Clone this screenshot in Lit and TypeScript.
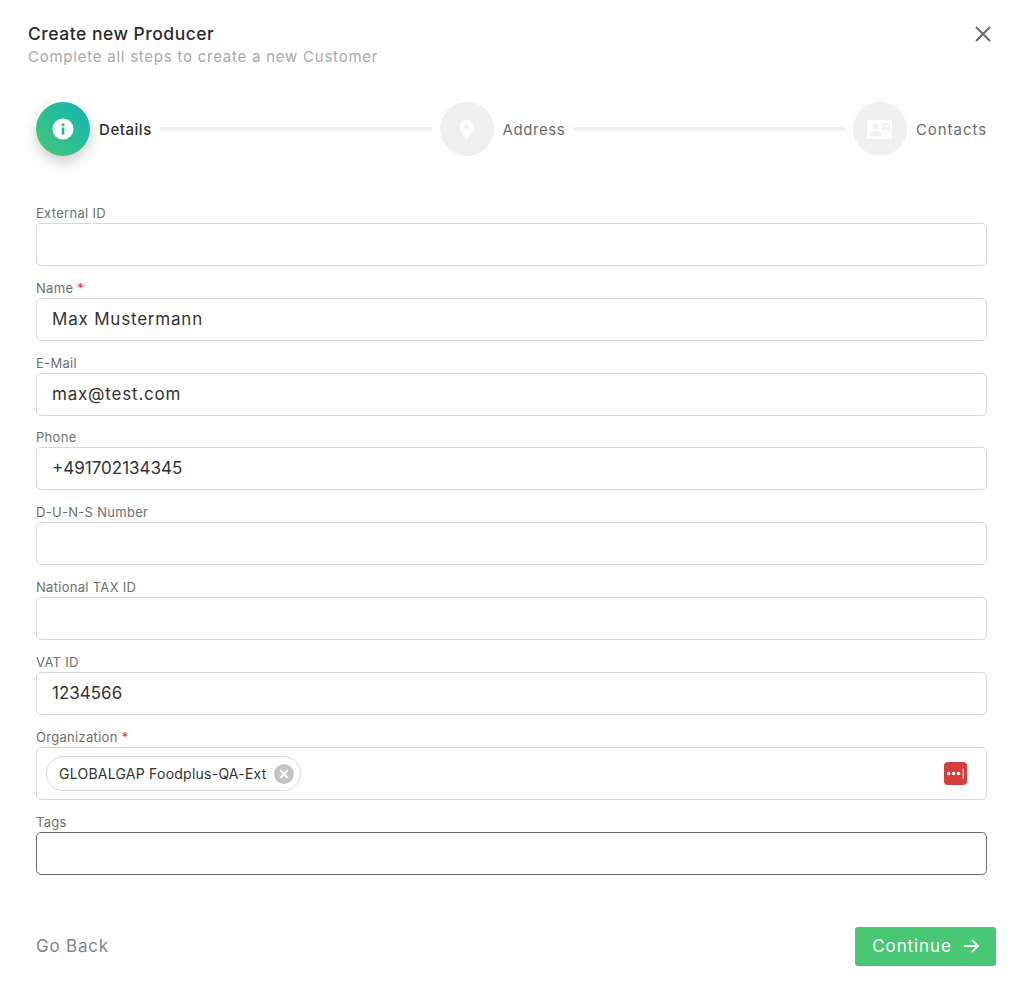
import { html, css, LitElement, nothing } from 'lit'
import { customElement } from 'lit/decorators.js'

type Field = { label: string; value?: string; required?: boolean; focused?: boolean; digits?: boolean }

const FIELDS_TOP: Field[] = [
  { label: 'External ID' },
  { label: 'Name', value: 'Max Mustermann', required: true },
  { label: 'E-Mail', value: 'max@test.com' },
  { label: 'Phone', value: '+491702134345', digits: true },
  { label: 'D-U-N-S Number' },
  { label: 'National TAX ID' },
  { label: 'VAT ID', value: '1234566', digits: true },
]

const infoIcon = html`<svg width="22" height="22" viewBox="0 0 22 22">
  <circle cx="11" cy="11" r="10.5" fill="#fff" />
  <circle cx="11" cy="6.8" r="1.5" fill="#1fb89a" />
  <rect x="9.7" y="9.4" width="2.6" height="7" rx="0.5" fill="#1fb89a" />
</svg>`

const pinIcon = html`<svg width="15" height="21" viewBox="0 0 16 22">
  <path
    fill-rule="evenodd"
    fill="#fff"
    d="M8 0.5C3.8 0.5 0.6 3.7 0.6 7.8C0.6 12.2 5.2 18 8 21.5C10.8 18 15.4 12.2 15.4 7.8C15.4 3.7 12.2 0.5 8 0.5ZM8 5.2A2.7 2.7 0 1 1 8 10.6A2.7 2.7 0 1 1 8 5.2Z"
  />
</svg>`

const contactIcon = html`<svg width="25" height="19" viewBox="0 0 26 20">
  <path
    fill-rule="evenodd"
    fill="#fff"
    d="M1 0H25A1 1 0 0 1 26 1V19A1 1 0 0 1 25 20H1A1 1 0 0 1 0 19V1A1 1 0 0 1 1 0ZM9 4A3.2 3.2 0 1 0 9 10.4A3.2 3.2 0 1 0 9 4ZM3 16.6H15C15 13.4 12.6 11.6 9 11.6C5.4 11.6 3 13.4 3 16.6ZM16 3.4V10H24V3.4ZM16.8 4.2L20 6.9L23.2 4.2V5.4L20 8.1L16.8 5.4Z"
  />
</svg>`

@customElement('app-root')
export class AppRoot extends LitElement {
  static styles = css`
    :host {
      display: block;
      box-sizing: border-box;
      width: 1024px;
      height: 997px;
      background: #fff;
      font-family: Inter, 'Noto Sans', sans-serif;
      color: #2b2b2b;
      overflow: hidden;
    }

    * {
      box-sizing: border-box;
    }

    .head {
      display: flex;
      justify-content: space-between;
      align-items: flex-start;
      padding: 23px 33px 0 28px;
      height: 102px;
    }

    .title {
      font-size: 17.5px;
      line-height: 22px;
      font-weight: 500;
      letter-spacing: 0.5px;
    }

    .subtitle {
      font-size: 15px;
      line-height: 24px;
      color: #a9a9a9;
      letter-spacing: 0.76px;
    }

    .close {
      margin-top: 3px;
      display: block;
    }

    .stepper {
      display: flex;
      align-items: center;
      margin: 0 37px 0 36px;
      height: 54px;
    }

    .circle {
      flex: none;
      width: 54px;
      height: 54px;
      border-radius: 50%;
      background: #efefef;
      display: flex;
      align-items: center;
      justify-content: center;
    }

    .circle.active {
      background: linear-gradient(45deg, #48c774, #0db5b5);
      box-shadow: 0 6px 14px rgba(0, 0, 0, 0.2);
    }

    .step-label {
      flex: none;
      margin-left: 9px;
      padding-top: 1px;
      font-size: 15px;
      line-height: 20px;
      color: #6e6e6e;
      letter-spacing: 0.55px;
    }

    .step-label.active {
      color: #2b2b2b;
      font-weight: 500;
      letter-spacing: 0.55px;
    }

    .step-label.wide {
      letter-spacing: 0.95px;
    }

    .line {
      flex: 1;
      height: 4px;
      margin: 0 8px;
      border-radius: 2px;
      background: #efefef;
    }

    form {
      display: flex;
      flex-direction: column;
      padding: 50px 37px 0 36px;
    }

    .field {
      display: flex;
      flex-direction: column;
      margin-bottom: 14.83px;
    }

    label {
      font-size: 13px;
      line-height: 15px;
      height: 17px;
      color: #6f6f6f;
      letter-spacing: 0.3px;
    }

    .req {
      color: #e8303a;
    }

    .input {
      height: 43px;
      border: 1px solid #d9d9d9;
      border-radius: 5px;
      padding: 0 15px 1px;
      display: flex;
      align-items: center;
      font-size: 17px;
      color: #333;
      letter-spacing: 0.8px;
    }

    .input.digits {
      letter-spacing: 0;
    }

    .input.focused {
      border-color: #6b6b6b;
    }

    .input.tall {
      height: 53.5px;
      padding: 0 19px 0 9px;
      justify-content: space-between;
    }

    .chip {
      display: flex;
      align-items: center;
      height: 35px;
      border: 1px solid #d9d9d9;
      border-radius: 18px;
      padding: 0 6px 0 12px;
      font-size: 14px;
      letter-spacing: 0.24px;
      color: #333;
      gap: 7px;
    }

    .actions {
      display: flex;
      justify-content: space-between;
      align-items: center;
      padding: 37px 28px 0 36px;
    }

    .back {
      font-size: 17px;
      color: #858585;
      letter-spacing: 0.8px;
    }

    .continue {
      display: flex;
      align-items: center;
      justify-content: center;
      gap: 11px;
      width: 141px;
      height: 39px;
      background: #48c774;
      border-radius: 3px;
      color: #fff;
      font-size: 17px;
      letter-spacing: 0.9px;
    }
  `

  private renderField(f: Field) {
    return html`<div class="field">
      <label>${f.label}${f.required ? html` <span class="req">*</span>` : nothing}</label>
      <div class="input ${f.focused ? 'focused' : ''} ${f.digits ? 'digits' : ''}">${f.value ?? ''}</div>
    </div>`
  }

  render() {
    return html`
      <div class="head">
        <div>
          <div class="title">Create new Producer</div>
          <div class="subtitle">Complete all steps to create a new Customer</div>
        </div>
        <svg class="close" width="16" height="16" viewBox="0 0 16 16">
          <path d="M1 1L15 15M15 1L1 15" stroke="#6a6a6a" stroke-width="2" fill="none" />
        </svg>
      </div>

      <div class="stepper">
        <div class="circle active">${infoIcon}</div>
        <div class="step-label active">Details</div>
        <div class="line"></div>
        <div class="circle">${pinIcon}</div>
        <div class="step-label">Address</div>
        <div class="line"></div>
        <div class="circle">${contactIcon}</div>
        <div class="step-label wide">Contacts</div>
      </div>

      <form>
        ${FIELDS_TOP.map((f) => this.renderField(f))}
        <div class="field">
          <label>Organization <span class="req">*</span></label>
          <div class="input tall">
            <div class="chip">
              GLOBALGAP Foodplus-QA-Ext
              <svg width="20" height="20" viewBox="0 0 20 20">
                <circle cx="10" cy="10" r="10" fill="#c4c4c4" />
                <path d="M6.3 6.3L13.7 13.7M13.7 6.3L6.3 13.7" stroke="#fff" stroke-width="2.2" />
              </svg>
            </div>
            <svg width="23" height="23" viewBox="0 0 23 23">
              <rect width="23" height="23" rx="4" fill="#d83d3d" />
              <circle cx="4.5" cy="11.5" r="1.8" fill="#fff" />
              <circle cx="9.5" cy="11.5" r="1.8" fill="#fff" />
              <circle cx="14.5" cy="11.5" r="1.8" fill="#fff" />
              <rect x="18.6" y="6.5" width="1.4" height="10" fill="#f5d0d0" />
            </svg>
          </div>
        </div>
        ${this.renderField({ label: 'Tags', focused: true })}
      </form>

      <div class="actions">
        <div class="back">Go Back</div>
        <div class="continue">
          Continue
          <svg width="16" height="14" viewBox="0 0 16 14">
            <path d="M1 7H15M9 1L15 7L9 13" stroke="#fff" stroke-width="1.8" fill="none" />
          </svg>
        </div>
      </div>
    `
  }
}
